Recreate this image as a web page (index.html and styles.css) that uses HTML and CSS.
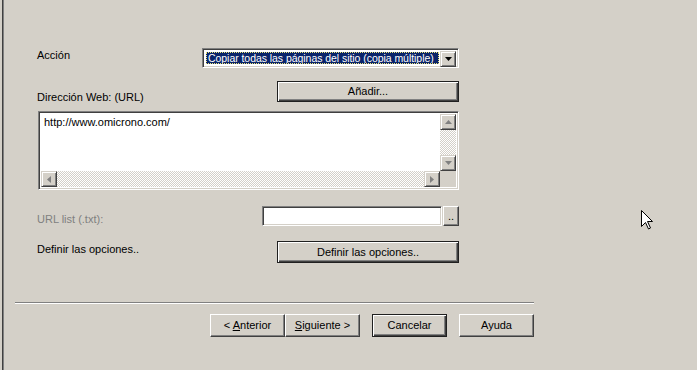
FILE: index.html
```html
<!DOCTYPE html>
<html lang="es">
<head>
<meta charset="utf-8">
<title>Asistente</title>
<link rel="stylesheet" href="styles.css">
</head>
<body>
<div class="window">
  <div class="form">
    <div class="row row-action">
      <span class="label label-action">Acción</span>
      <div class="field select">
        <span class="select-value"><span class="sel-text">Copiar todas las páginas del sitio (copia múltiple)</span></span>
        <span class="sb-btn select-btn"><svg width="7" height="4" viewBox="0 0 7 4"><polygon points="0,0 7,0 3.5,4" fill="#000"/></svg></span>
      </div>
    </div>
    <div class="row row-url">
      <span class="label label-url">Dirección Web: (URL)</span>
      <div class="btn btn-framed btn-wide btn-add"><span>Añadir...</span></div>
    </div>
    <div class="field memo">
      <div class="memo-text">http://www.omicrono.com/</div>
      <div class="vscroll">
        <span class="sb-btn"><svg width="7" height="4" viewBox="0 0 7 4"><polygon points="0,4 7,4 3.5,0" fill="#808080"/></svg></span>
        <span class="track"></span>
        <span class="sb-btn"><svg width="7" height="4" viewBox="0 0 7 4"><polygon points="0,0 7,0 3.5,4" fill="#808080"/></svg></span>
      </div>
      <div class="hscroll">
        <span class="sb-btn"><svg width="4" height="7" viewBox="0 0 4 7"><polygon points="4,0 4,7 0,3.5" fill="#808080"/></svg></span>
        <span class="track"></span>
        <span class="sb-btn"><svg width="4" height="7" viewBox="0 0 4 7"><polygon points="0,0 0,7 4,3.5" fill="#808080"/></svg></span>
      </div>
      <div class="corner"></div>
    </div>
    <div class="row row-list">
      <span class="label label-disabled">URL list (.txt):</span>
      <div class="list-controls">
        <div class="field input"></div>
        <div class="btn btn-dots"><span>..</span></div>
      </div>
    </div>
    <div class="row row-options">
      <span class="label label-options">Definir las opciones..</span>
      <div class="btn btn-framed btn-wide btn-options"><span>Definir las opciones..</span></div>
    </div>
  </div>
  <div class="footer">
    <div class="separator"></div>
    <div class="nav">
      <div class="btn btn-nav"><span>&lt; <u>A</u>nterior</span></div>
      <div class="btn btn-nav"><span><u>S</u>iguiente &gt;</span></div>
      <div class="btn btn-nav btn-default btn-gap"><span>Cancelar</span></div>
      <div class="btn btn-nav btn-gap"><span>Ayuda</span></div>
    </div>
  </div>
</div>
<svg class="cursor" width="13" height="20" viewBox="0 0 13 20">
  <polygon points="0.5,0.5 0.5,16.5 4.5,12.5 7.5,19 9.5,18 6.5,11.5 11.5,11.5" fill="#fff" stroke="#000" stroke-width="1" stroke-linejoin="miter"/>
</svg>
</body>
</html>
```
FILE: styles.css
```css
* {
  box-sizing: border-box;
}

html, body {
  margin: 0;
  padding: 0;
}

body {
  position: relative;
  width: 697px;
  height: 370px;
  overflow: hidden;
  background: #d4d0c8;
  font-family: "Liberation Sans", Arial, sans-serif;
  font-size: 11px;
  line-height: 13px;
  color: #000;
}

.window {
  margin-left: 2px;
  height: 370px;
  border-left: 1px solid #404040;
  box-shadow: inset 1px 0 #808080;
}

.form {
  margin-left: 34px;
  padding-top: 48px;
  width: 422px;
}

.row {
  display: flex;
  justify-content: space-between;
}

.label {
  white-space: nowrap;
}

.label-action {
  margin-top: 1px;
}

.label-disabled {
  color: #808080;
}

/* generic 3D pieces */
.field {
  background: #fff;
  border: 1px solid;
  border-color: #808080 #fff #fff #808080;
  box-shadow: inset 1px 1px #404040, inset -1px -1px #d4d0c8;
}

.btn {
  display: flex;
  align-items: center;
  justify-content: center;
  white-space: nowrap;
  background: #d4d0c8;
  border: 1px solid;
  border-color: #fff #404040 #404040 #fff;
  box-shadow: inset -1px -1px #808080;
}

.btn u {
  text-decoration: underline;
  text-underline-offset: 1px;
}

.btn-framed,
.btn-default {
  border: 1px solid #202020;
  box-shadow: inset 1px 1px #fff, inset -1px -1px #404040, inset -2px -2px #808080;
}

.sb-btn {
  display: flex;
  align-items: center;
  justify-content: center;
  width: 16px;
  height: 16px;
  flex: none;
  background: #d4d0c8;
  border: 1px solid;
  border-color: #d4d0c8 #404040 #404040 #d4d0c8;
  box-shadow: inset 1px 1px #fff, inset -1px -1px #808080;
}

.track {
  flex: 1;
  background: repeating-conic-gradient(#d4d0c8 0 25%, #fff 0 50%) 0 0 / 2px 2px;
}

/* Row 1: action select */
.row-action {
  height: 20px;
}

.select {
  display: flex;
  align-items: stretch;
  width: 257px;
  height: 20px;
  padding: 2px;
}

.select-value {
  flex: 1;
  display: flex;
  padding: 1px;
  min-width: 0;
}

.sel-text {
  flex: 1;
  display: flex;
  align-items: center;
  background: #0a246a;
  color: #fff;
  border: 1px dotted #e9e27a;
  padding-left: 1px;
  white-space: nowrap;
  overflow: hidden;
  font-size: 10.5px;
  letter-spacing: -0.05px;
}

.select-btn {
  width: 16px;
  height: 16px;
}

/* Row 2: URL */
.row-url {
  margin-top: 13px;
  align-items: flex-end;
}

.label-url {
  margin-bottom: -2px;
}

.btn-wide {
  width: 182px;
}

.btn-add {
  height: 21px;
}

/* memo */
.memo {
  margin-top: 9px;
  margin-left: 1px;
  width: 421px;
  height: 79px;
  padding: 2px;
  display: grid;
  grid-template-columns: 1fr 16px;
  grid-template-rows: 1fr 16px;
}

.memo-text {
  padding: 2px 0 0 3px;
}

.vscroll {
  display: flex;
  flex-direction: column;
}

.hscroll {
  display: flex;
}

.corner {
  background: #d4d0c8;
}

/* Row 3: URL list */
.row-list {
  margin-top: 16px;
  height: 20px;
}

.row-list .label {
  margin-top: 7px;
}

.list-controls {
  display: flex;
  gap: 1px;
}

.input {
  width: 180px;
  height: 20px;
}

.btn-dots {
  width: 16px;
  height: 20px;
  align-items: flex-end;
  padding-bottom: 3px;
  line-height: 11px;
}

/* Row 4: options */
.row-options {
  margin-top: 15px;
  height: 22px;
}

.label-options {
  margin-top: 2px;
}

.btn-options {
  height: 22px;
}

/* footer */
.footer {
  margin-left: 12px;
  margin-top: 39px;
  width: 519px;
}

.separator {
  height: 2px;
  border-top: 1px solid #808080;
  border-bottom: 1px solid #fff;
}

.nav {
  display: flex;
  justify-content: flex-end;
  margin-top: 10px;
}

.btn-nav {
  width: 75px;
  height: 23px;
}

.btn-gap {
  margin-left: 12px;
}

.cursor {
  position: absolute;
  left: 641px;
  top: 210px;
}
```
